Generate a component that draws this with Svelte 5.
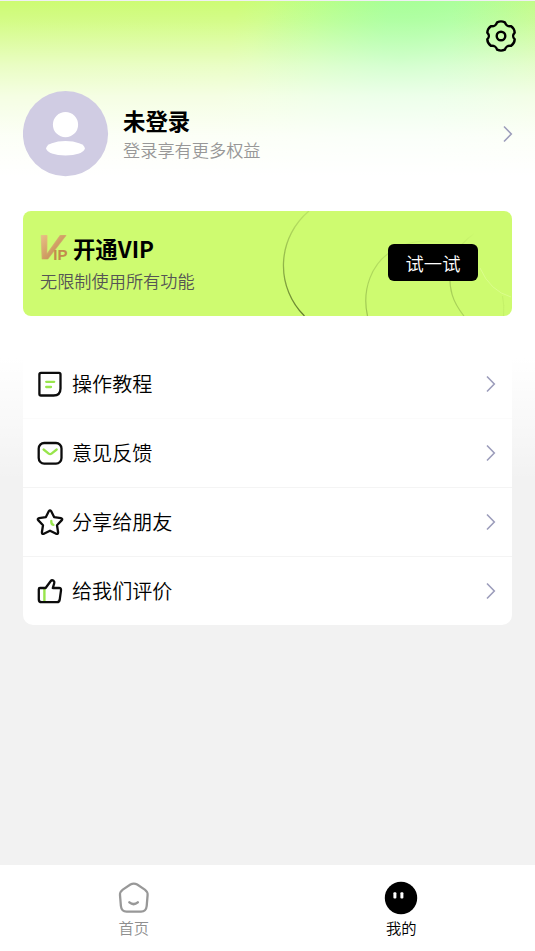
<script>
  const menuItems = [
    { icon: 'doc', label: '操作教程' },
    { icon: 'mail', label: '意见反馈' },
    { icon: 'star', label: '分享给朋友' },
    { icon: 'thumb', label: '给我们评价' }
  ];
</script>

{#snippet chevron()}
  <svg class="chevron" width="12" height="18" viewBox="0 0 12 18">
    <path d="M2 1.5 L9.3 9 L2 16.5" fill="none" stroke="#9c9dbb" stroke-width="1.6" />
  </svg>
{/snippet}

<div class="page">
  <header>
    <button class="settings" aria-label="设置">
      <svg width="32" height="34" viewBox="0 0 32 34" fill="none" stroke="#000" stroke-width="2.4" stroke-linejoin="round">
        <path d="M12.2 3.3 Q16 1.5 19.8 3.3 C21.2 6.8 22.6 7.6 26.2 7.2 Q29.5 9.6 29.7 13.6 C27.4 16.2 27.4 17.8 29.7 20.4 Q29.5 24.4 26.2 26.8 C22.6 26.4 21.2 27.2 19.8 30.7 Q16 32.5 12.2 30.7 C10.8 27.2 9.4 26.4 5.8 26.8 Q2.5 24.4 2.3 20.4 C4.6 17.8 4.6 16.2 2.3 13.6 Q2.5 9.6 5.8 7.2 C9.4 7.6 10.8 6.8 12.2 3.3 Z" />
        <circle cx="16" cy="17" r="4.3" />
      </svg>
    </button>
  </header>

  <section class="profile">
    <svg class="avatar" width="86" height="86" viewBox="0 0 86 86">
      <circle cx="42.5" cy="42.7" r="42.6" fill="#d0cce3" />
      <circle cx="42.5" cy="33.7" r="12.6" fill="#fff" />
      <ellipse cx="42.5" cy="57.3" rx="19.3" ry="7.3" fill="#fff" />
    </svg>
    <div class="who">
      <h1>未登录</h1>
      <p>登录享有更多权益</p>
    </div>
    {@render chevron()}
  </section>

  <section class="vip">
    <svg class="rings" width="245" height="105" viewBox="0 0 245 105" fill="none">
      <defs>
        <linearGradient id="ring" x1="0" y1="0" x2="0" y2="1">
          <stop offset="0" stop-color="#506b20" stop-opacity="0.15" />
          <stop offset="1" stop-color="#405515" stop-opacity="0.75" />
        </linearGradient>
        <linearGradient id="ring-soft" x1="0" y1="1" x2="1" y2="0">
          <stop offset="0" stop-color="#7da03c" stop-opacity="0.6" />
          <stop offset="1" stop-color="#8db548" stop-opacity="0" />
        </linearGradient>
      </defs>
      <path d="M43 0 A71 71 0 0 0 38.5 105" stroke="url(#ring)" stroke-width="1.3" />
      <path d="M101.5 105 C95.5 78 106 52 126 40 C141 30 163 27 183 33" stroke="url(#ring-soft)" stroke-width="1.2" />
      <path d="M198 105 C186 90 183 78 184 60 C186 42 196 31 209 22" stroke="url(#ring-soft)" stroke-width="1.2" />
      <path d="M214 57 Q224 80 245 86" stroke="#e3ff9f" stroke-opacity="0.6" />
      <path d="M237.5 105 Q238.5 94 236.5 85" stroke="#a8d354" stroke-opacity="0.25" />
    </svg>
    <div class="vip-text">
      <h2>
        <svg class="vip-logo" width="29" height="28" viewBox="0 0 29 28">
          <defs>
            <linearGradient id="gold" x1="0" y1="0" x2="1" y2="1">
              <stop offset="0" stop-color="#eec58d" />
              <stop offset="1" stop-color="#bc8349" />
            </linearGradient>
          </defs>
          <text class="logo-v" transform="translate(-7.6 25) skewX(-20)" x="0" y="0" textLength="25" lengthAdjust="spacingAndGlyphs" fill="url(#gold)" stroke="url(#gold)" stroke-width="0.7">V</text>
          <text class="logo-ip" x="13.3" y="26.3" fill="#c28b4c">IP</text>
        </svg>
        <span>开通VIP</span>
      </h2>
      <p>无限制使用所有功能</p>
    </div>
    <button class="try">试一试</button>
  </section>

  <ul class="menu">
    {#each menuItems as item}
      <li>
        <svg class="icon" width="30" height="30" viewBox="0 0 30 30" fill="none" stroke="#0c0c0c" stroke-width="2.3" stroke-linecap="round" stroke-linejoin="round">
          {#if item.icon === 'doc'}
            <path d="M6 3.9 H24 Q25.5 3.9 25.5 5.5 V19.5 Q25.5 26.5 18.5 26.5 H6 Q4.4 26.5 4.4 24.9 V5.5 Q4.4 3.9 6 3.9 Z" />
            <path d="M11.2 12.8 H19.2 M11.2 18 H16" stroke="#98e54c" />
          {:else if item.icon === 'mail'}
            <rect x="3.7" y="5" width="22.8" height="20.6" rx="5.5" />
            <path d="M8.6 11.5 L13.7 15.6 Q15.1 16.7 16.5 15.6 L21.7 11.5" stroke="#98e54c" />
          {:else if item.icon === 'star'}
            <path d="M13.9 4.1 Q15 2.6 16.1 4.1 L19.1 10.1 L25.9 11.1 Q28.2 11.7 26.6 13.4 L22 18.2 L23.1 25.3 Q23.1 27.5 21.2 26.8 L15 23.7 L8.8 26.8 Q6.9 27.5 6.9 25.3 L8 18.2 L3.4 13.4 Q1.8 11.7 4.1 11.1 L10.9 10.1 Z" />
            <path d="M16.3 14 Q16.1 17.3 18.4 17.9" stroke="#98e54c" />
          {:else}
            <path d="M9.4 13.6 V25" stroke="#98e54c" stroke-width="2.4" />
            <path d="M5 12 H10.6 L15.6 5.2 Q16.8 3.6 18.6 4.8 Q19.8 5.9 19.2 7.4 L17.8 12 H24.1 Q26.3 12 26 14.3 L24.7 23.8 Q24.3 26.2 22.1 26.2 H6.8 Q3.8 26.2 3.8 23.4 V13.2 Q3.8 12 5 12 Z" />
          {/if}
        </svg>
        <span class="label">{item.label}</span>
        {@render chevron()}
      </li>
    {/each}
  </ul>

  <nav>
    <a class="tab" href="#home">
      <svg width="34" height="34" viewBox="0 0 34 34" fill="none" stroke="#989898" stroke-linecap="round">
        <path d="M13.4 3.6 Q16.8 1.6 20.2 3.6 L27.8 8.6 Q30.9 10.8 30.6 14.2 L29.7 25 Q29.1 30.6 24 30.6 H9.6 Q4.5 30.6 3.9 25 L3 14.2 Q2.7 10.8 5.8 8.6 Z" stroke-width="2.3" />
        <path d="M12.4 21.4 Q16.6 24.8 20.8 21.4" stroke-width="2.5" />
      </svg>
      <span>首页</span>
    </a>
    <a class="tab active" href="#mine">
      <svg width="34" height="34" viewBox="0 0 34 34">
        <circle cx="17" cy="17" r="16.2" fill="#000" />
        <rect x="9.4" y="11.3" width="3" height="6.2" rx="1" fill="#fff" />
        <rect x="16.4" y="11.3" width="3" height="6.2" rx="1" fill="#fff" />
      </svg>
      <span>我的</span>
    </a>
  </nav>
</div>

<style>
  :global(body) {
    margin: 0;
  }

  .page {
    box-sizing: border-box;
    height: 951px;
    display: flex;
    flex-direction: column;
    overflow: hidden;
    border-top: 1px solid #f0eff4;
    font-family: "Noto Sans CJK SC", sans-serif;
    background:
      linear-gradient(to bottom, rgba(255, 255, 255, 0) 0, rgba(255, 255, 255, 0.14) 20px, rgba(255, 255, 255, 0.58) 65px, rgba(255, 255, 255, 0.8) 95px, rgba(255, 255, 255, 0.94) 135px, #fff 175px, #fff 357px, rgba(255, 255, 255, 0) 480px),
      radial-gradient(ellipse 150px 110px at 400px 60px, rgba(130, 255, 125, 0.5), rgba(150, 255, 140, 0)) no-repeat 0 0 / 100% 180px,
      linear-gradient(100deg, #cdfb73 0, #cdfc76 42%, #c2ff89 56%, #b4ffa0 69%, #b4ffa2 80%, #c6fb84 98%) no-repeat 0 0 / 100% 180px,
      #f2f2f2;
  }

  h1,
  h2,
  p,
  ul {
    margin: 0;
    padding: 0;
  }

  button {
    border: 0;
    padding: 0;
    font-family: inherit;
  }

  header {
    height: 90px;
    display: flex;
    justify-content: flex-end;
    align-items: flex-start;
    box-sizing: border-box;
    padding: 17.5px 18px 0 0;
  }

  .settings {
    background: none;
    height: 34px;
  }

  .settings svg {
    display: block;
  }

  .chevron {
    flex: none;
    margin-left: auto;
  }

  .profile {
    height: 86px;
    display: flex;
    align-items: center;
    padding: 0 20.8px 0 23px;
  }

  .who {
    margin-left: 14px;
  }

  h1 {
    font-size: 22.4px;
    line-height: 30px;
    font-weight: 700;
  }

  .who p {
    font-size: 17.2px;
    line-height: 28px;
    padding-top: 1px;
    font-weight: 350;
    color: #979797;
  }

  .vip {
    position: relative;
    box-sizing: border-box;
    height: 105px;
    margin: 34px 22.6px 0 23.4px;
    padding: 0 34.4px 0 16.6px;
    display: flex;
    align-items: center;
    justify-content: space-between;
    overflow: hidden;
    border-radius: 8px;
    background: #cefb70;
  }

  .rings {
    position: absolute;
    top: 0;
    right: 1px;
  }

  .vip-text {
    position: relative;
    padding-top: 1px;
  }

  h2 {
    display: flex;
    align-items: center;
    gap: 4px;
    font-size: 22.4px;
    line-height: 32px;
    font-weight: 700;
  }

  .vip-logo {
    overflow: visible;
  }

  .logo-v {
    font: 700 34px "Liberation Sans", sans-serif;
  }

  .logo-ip {
    font: 700 15px "Liberation Sans", sans-serif;
  }

  .vip-text p {
    font-size: 17.2px;
    line-height: 33px;
    font-weight: 350;
    color: #555;
  }

  .try {
    position: relative;
    top: -1px;
    width: 90px;
    height: 37px;
    border-radius: 6px;
    background: #000;
    color: #fff;
    font-size: 18.3px;
    line-height: 36px;
    font-weight: 350;
  }

  .menu {
    margin: 34px 23px 0;
    list-style: none;
    background: #fff;
    border-radius: 10px;
  }

  li {
    box-sizing: border-box;
    height: 69px;
    display: flex;
    align-items: center;
    padding: 0 15px 0 12px;
    border-bottom: 1px solid #f4f4f4;
  }

  li:first-child {
    border-bottom-color: #fbfbfb;
  }

  li:last-child {
    height: 68px;
    border-bottom: 0;
  }

  .label {
    margin-left: 7px;
    font-size: 20.1px;
    line-height: 30px;
    font-weight: 350;
    color: #000;
  }

  nav {
    display: flex;
    height: 86px;
    margin-top: auto;
    background: #fff;
  }

  .tab {
    flex: 1;
    display: flex;
    flex-direction: column;
    align-items: center;
    padding-top: 16px;
    color: #8f8f8f;
    text-decoration: none;
    font-size: 15.3px;
    line-height: 25px;
    font-weight: 350;
  }

  .tab.active {
    color: #000;
  }
</style>
